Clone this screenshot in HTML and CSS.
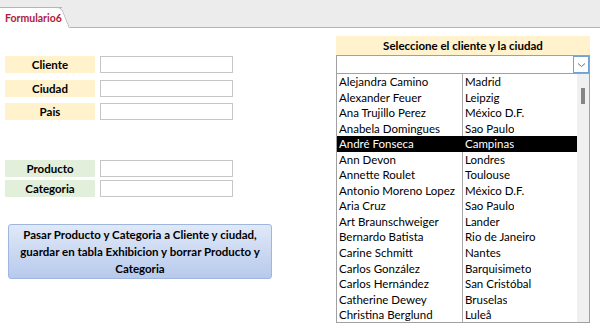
FILE: index.html
```html
<!DOCTYPE html>
<html lang="es">
<head>
    <meta charset="UTF-8">
    <title>Formulario6</title>
    <link rel="stylesheet" href="styles.css">
</head>
<body>
    <div class="tab-bar">
        <div class="tab">Formulario6</div>
    </div>

    <div class="form-body">
        <div class="left-col">
            <div class="field-group">
                <div class="field-row">
                    <span class="label label-yellow">Cliente</span>
                    <span class="text-box"></span>
                </div>
                <div class="field-row">
                    <span class="label label-yellow">Ciudad</span>
                    <span class="text-box"></span>
                </div>
                <div class="field-row">
                    <span class="label label-yellow">Pais</span>
                    <span class="text-box"></span>
                </div>
            </div>

            <div class="field-group tight">
                <div class="field-row">
                    <span class="label label-green">Producto</span>
                    <span class="text-box"></span>
                </div>
                <div class="field-row">
                    <span class="label label-green">Categoria</span>
                    <span class="text-box"></span>
                </div>
            </div>

            <button class="action-button">Pasar Producto y Categoria a Cliente y ciudad, guardar en tabla Exhibicion y borrar Producto y Categoria</button>
        </div>

        <div class="right-col">
            <div class="combo-title">Seleccione el cliente y la ciudad</div>
            <div class="combo">
                <span class="combo-value"></span>
                <span class="combo-arrow">
                    <svg width="9" height="6" viewBox="0 0 9 6"><path d="M1 1.5 L4.5 4.5 L8 1.5" fill="none" stroke="#707070" stroke-width="1"/></svg>
                </span>
            </div>
            <div class="list">
                <div class="rows" id="rows"></div>
                <div class="scrollbar"><span class="thumb"></span></div>
            </div>
        </div>
    </div>

    <script>
        const clientes = [
            ['Alejandra Camino', 'Madrid'],
            ['Alexander Feuer', 'Leipzig'],
            ['Ana Trujillo Perez', 'México D.F.'],
            ['Anabela Domingues', 'Sao Paulo'],
            ['André Fonseca', 'Campinas'],
            ['Ann Devon', 'Londres'],
            ['Annette Roulet', 'Toulouse'],
            ['Antonio Moreno Lopez', 'México D.F.'],
            ['Aria Cruz', 'Sao Paulo'],
            ['Art Braunschweiger', 'Lander'],
            ['Bernardo Batista', 'Rio de Janeiro'],
            ['Carine Schmitt', 'Nantes'],
            ['Carlos González', 'Barquisimeto'],
            ['Carlos Hernández', 'San Cristóbal'],
            ['Catherine Dewey', 'Bruselas'],
            ['Christina Berglund', 'Luleå']
        ];

        const rows = document.getElementById('rows');
        clientes.forEach(function(c, i) {
            const row = document.createElement('div');
            row.className = 'row' + (i === 4 ? ' selected' : '');
            row.innerHTML = '<span class="cell">' + c[0] + '</span><span class="cell">' + c[1] + '</span>';
            rows.appendChild(row);
        });
    </script>
</body>
</html>
```

FILE: styles.css
```css
body {
    margin: 0;
    padding: 0;
    background: #fff;
    font-family: 'Lato', 'Open Sans', sans-serif;
    color: #000;
}
.tab-bar {
    height: 27px;
    background: #ececec;
    border-bottom: 1px solid #b4b4b4;
    display: flex;
    align-items: flex-end;
}
.tab {
    position: relative;
    z-index: 0;
    top: 1px;
    height: 20px;
    padding: 0 0 0 5px;
    width: 57px;
    background: #fff;
    border-top: 1px solid #b4b4b4;
    color: #b0203a;
    font-weight: bold;
    font-size: 10.5px;
    line-height: 20px;
    white-space: nowrap;
}
.tab::after {
    content: "";
    position: absolute;
    z-index: -1;
    top: -1px;
    right: -8px;
    width: 12px;
    height: 20px;
    background: #fff;
    border-top: 1px solid #b4b4b4;
    border-right: 1px solid #b4b4b4;
    border-radius: 0 5px 0 0;
    transform: skewX(22deg);
    transform-origin: bottom left;
}
.form-body {
    display: flex;
}
.left-col {
    width: 331px;
    padding: 28px 0 0 5px;
    display: flex;
    flex-direction: column;
}
.field-group {
    display: flex;
    flex-direction: column;
    gap: 6.5px;
}
.field-group.tight {
    margin-top: 40px;
    gap: 3px;
}
.field-row {
    display: flex;
    gap: 5px;
    height: 17px;
}
.label {
    width: 90px;
    text-align: center;
    font-weight: bold;
    font-size: 11.5px;
    line-height: 17px;
}
.label-yellow {
    background: #fff2cc;
}
.label-green {
    background: #e2efda;
}
.text-box {
    width: 131px;
    border: 1px solid #c6c6c6;
    background: #fff;
}
.action-button {
    margin: 27px 0 0 3px;
    width: 264px;
    height: 55px;
    padding: 0 6px;
    border: 1px solid #9fb6de;
    border-radius: 3px;
    background: linear-gradient(#e0e9f8, #b7c9ec);
    font-family: 'Lato', 'Open Sans', sans-serif;
    font-weight: bold;
    font-size: 11.5px;
    line-height: 17px;
    text-align: center;
    color: #000;
}
.right-col {
    width: 254px;
    padding-top: 8px;
}
.combo-title {
    height: 19px;
    background: #fff2cc;
    text-align: center;
    font-weight: bold;
    font-size: 11.5px;
    line-height: 19px;
}
.combo {
    height: 17px;
    border: 1px solid #a0a0a0;
    display: flex;
}
.combo-value {
    flex: 1;
}
.combo-arrow {
    width: 14px;
    border: 1px solid #6fa3d8;
    display: flex;
    align-items: center;
    justify-content: center;
    background: #fff;
}
.list {
    height: 248px;
    border: 1px solid #a0a0a0;
    border-top: none;
    display: flex;
    overflow: hidden;
}
.rows {
    flex: 1;
    display: flex;
    flex-direction: column;
    background: linear-gradient(to right, transparent 125px, #a8a8a8 125px, #a8a8a8 126px, transparent 126px);
}
.row {
    height: 15.55px;
    display: flex;
    font-size: 11.5px;
    line-height: 15.55px;
}
.row.selected {
    background: #000;
    color: #fff;
}
.cell {
    white-space: nowrap;
    overflow: hidden;
}
.cell:first-child {
    width: 125px;
    padding-left: 2px;
    box-sizing: border-box;
    margin-right: 1px;
}
.cell:last-child {
    padding-left: 2px;
}
.scrollbar {
    width: 12px;
    background: #f0f0f0;
    position: relative;
}
.thumb {
    position: absolute;
    left: 4px;
    top: 14px;
    width: 4px;
    height: 16px;
    background: #858585;
}
```
